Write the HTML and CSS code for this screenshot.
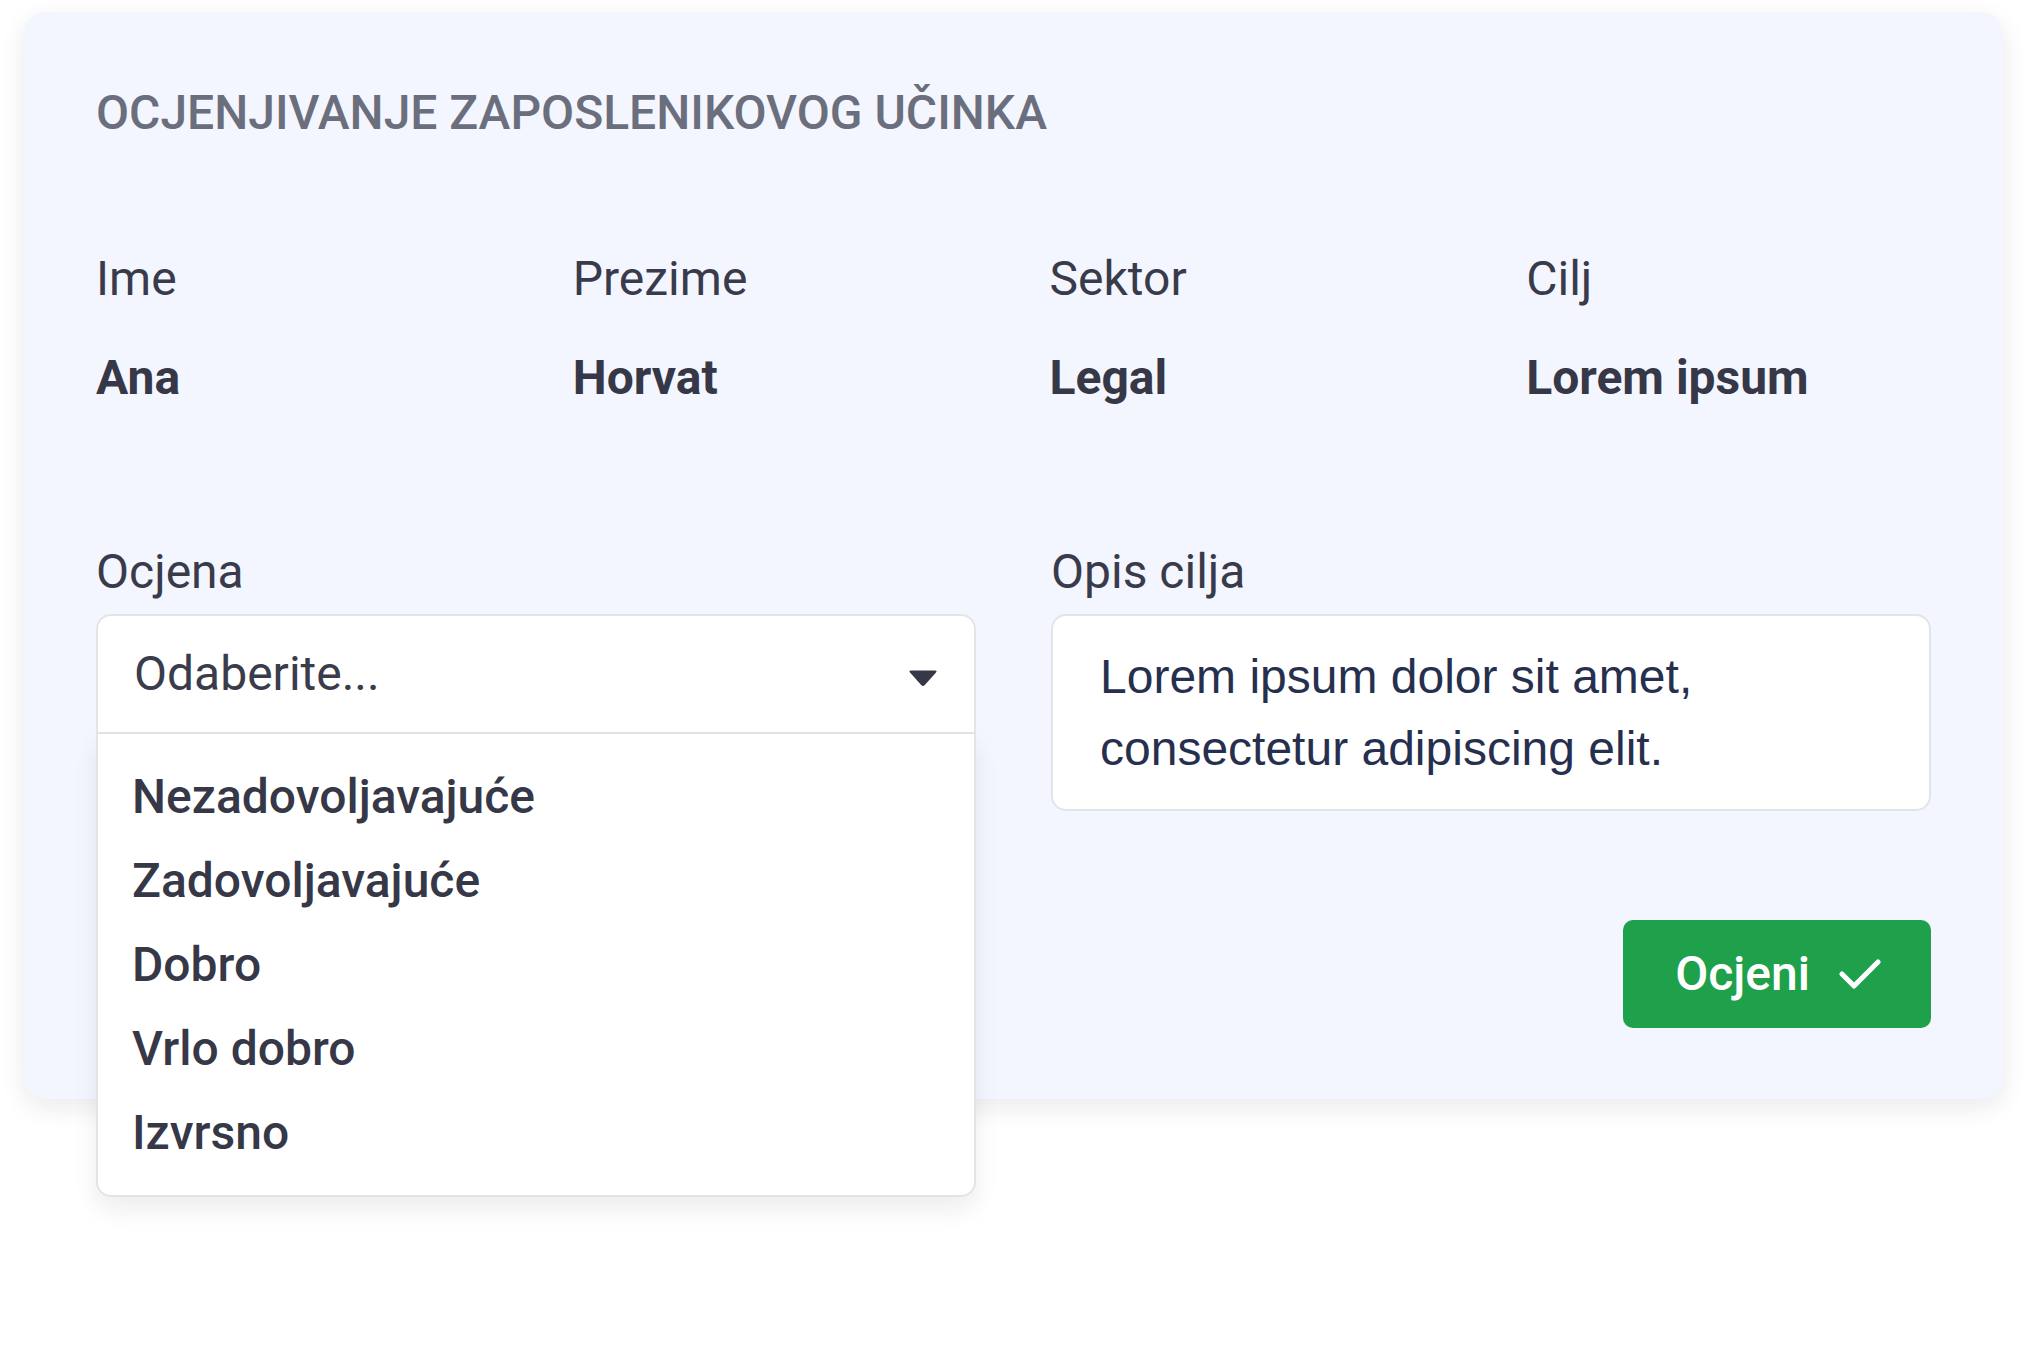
FILE: index.html
```html
<!DOCTYPE html>
<html lang="hr">
<head>
<meta charset="utf-8">
<title>Ocjenjivanje zaposlenikovog učinka</title>
<link rel="stylesheet" href="styles.css">
</head>
<body>
<div class="page">
  <section class="card">
    <h1 class="title">OCJENJIVANJE ZAPOSLENIKOVOG UČINKA</h1>

    <div class="info-grid">
      <div class="info">
        <div class="info-label">Ime</div>
        <div class="info-value">Ana</div>
      </div>
      <div class="info">
        <div class="info-label">Prezime</div>
        <div class="info-value">Horvat</div>
      </div>
      <div class="info">
        <div class="info-label">Sektor</div>
        <div class="info-value">Legal</div>
      </div>
      <div class="info">
        <div class="info-label">Cilj</div>
        <div class="info-value">Lorem ipsum</div>
      </div>
    </div>

    <div class="form-grid">
      <div class="field">
        <div class="field-label">Ocjena</div>
        <div class="select">
          <div class="select-head">
            <span class="select-placeholder">Odaberite...</span>
            <svg class="caret" width="30" height="18" viewBox="0 0 30 18" aria-hidden="true">
              <path d="M3 1.5 H27 Q29.5 1.5 28 3.5 L16.6 16.2 Q15 17.8 13.4 16.2 L2 3.5 Q0.5 1.5 3 1.5 Z" fill="#363847"/>
            </svg>
          </div>
          <ul class="select-menu">
            <li class="option">Nezadovoljavajuće</li>
            <li class="option">Zadovoljavajuće</li>
            <li class="option">Dobro</li>
            <li class="option">Vrlo dobro</li>
            <li class="option">Izvrsno</li>
          </ul>
        </div>
      </div>
      <div class="field">
        <div class="field-label">Opis cilja</div>
        <div class="textbox">Lorem ipsum dolor sit amet,<br>consectetur adipiscing elit.</div>
      </div>
    </div>

    <div class="actions">
      <button class="btn" type="button">
        <span>Ocjeni</span>
        <svg class="check" width="42" height="30" viewBox="0 0 42 30" aria-hidden="true">
          <polyline points="3,15 15,27 39,3" fill="none" stroke="#ffffff" stroke-width="5" stroke-linecap="round" stroke-linejoin="round"/>
        </svg>
      </button>
    </div>
  </section>
</div>
</body>
</html>
```

FILE: styles.css
```css
* {
  box-sizing: border-box;
}

html, body {
  margin: 0;
  padding: 0;
  background: #ffffff;
}

body {
  font-family: Roboto, "Noto Sans", Arial, sans-serif;
  color: #393b4b;
}

.page {
  min-height: 100vh;
  padding: 12px 25px 0 24px;
}

.card {
  background: #f3f6fe;
  border-radius: 22px;
  box-shadow: 0 8px 26px rgba(20, 24, 40, 0.09);
  padding: 65px 72px 71px 72px;
}

.title {
  margin: 0;
  font-size: 48px;
  line-height: 72px;
  font-weight: 500;
  color: #6b6e7c;
}

.info-grid {
  display: grid;
  grid-template-columns: repeat(4, 1fr);
  column-gap: 72px;
  margin-top: 94px;
}

.info-label {
  font-size: 48px;
  line-height: 72px;
  font-weight: 400;
  color: #393b4b;
}

.info-value {
  margin-top: 27px;
  font-size: 48px;
  line-height: 72px;
  font-weight: 700;
  color: #363847;
}

.form-grid {
  display: grid;
  grid-template-columns: 1fr 1fr;
  column-gap: 75px;
  margin-top: 122px;
  align-items: start;
}

.field-label {
  font-size: 48px;
  line-height: 72px;
  color: #393b4b;
  margin-bottom: 6px;
}

.select {
  position: relative;
}

.select-head {
  height: 120px;
  background: #ffffff;
  border: 2px solid #e2e4e8;
  border-radius: 15px 15px 0 0;
  display: flex;
  align-items: center;
  justify-content: space-between;
  padding: 0 36px 0 36px;
}

.select-placeholder {
  font-size: 48px;
  line-height: 72px;
  color: #3a3c4b;
}

.caret {
  display: block;
  margin-top: 7px;
}

.select-menu {
  position: absolute;
  top: 100%;
  left: 0;
  right: 0;
  z-index: 2;
  margin: 0;
  list-style: none;
  background: #ffffff;
  border: 2px solid #e2e4e8;
  border-top: none;
  border-radius: 0 0 15px 15px;
  padding: 21px 0 20px 34px;
  box-shadow: 0 12px 24px rgba(20, 24, 40, 0.08);
}

.option {
  font-size: 48px;
  line-height: 84px;
  font-weight: 500;
  color: #363847;
}

.textbox {
  height: 197px;
  background: #ffffff;
  border: 2px solid #e2e4e8;
  border-radius: 15px;
  padding: 25px 40px 0 47px;
  font-family: "Liberation Sans", Arial, sans-serif;
  font-size: 48px;
  line-height: 72px;
  color: #272f4e;
}

.actions {
  display: flex;
  justify-content: flex-end;
  margin-top: 109px;
}

.btn {
  display: flex;
  align-items: center;
  gap: 29px;
  height: 108px;
  padding: 0 50px 0 52px;
  border: none;
  border-radius: 10px;
  background: #1fa04b;
  color: #ffffff;
  font-family: Roboto, "Noto Sans", Arial, sans-serif;
  font-size: 48px;
  font-weight: 500;
  line-height: 72px;
  cursor: pointer;
}

.check {
  display: block;
}
```
